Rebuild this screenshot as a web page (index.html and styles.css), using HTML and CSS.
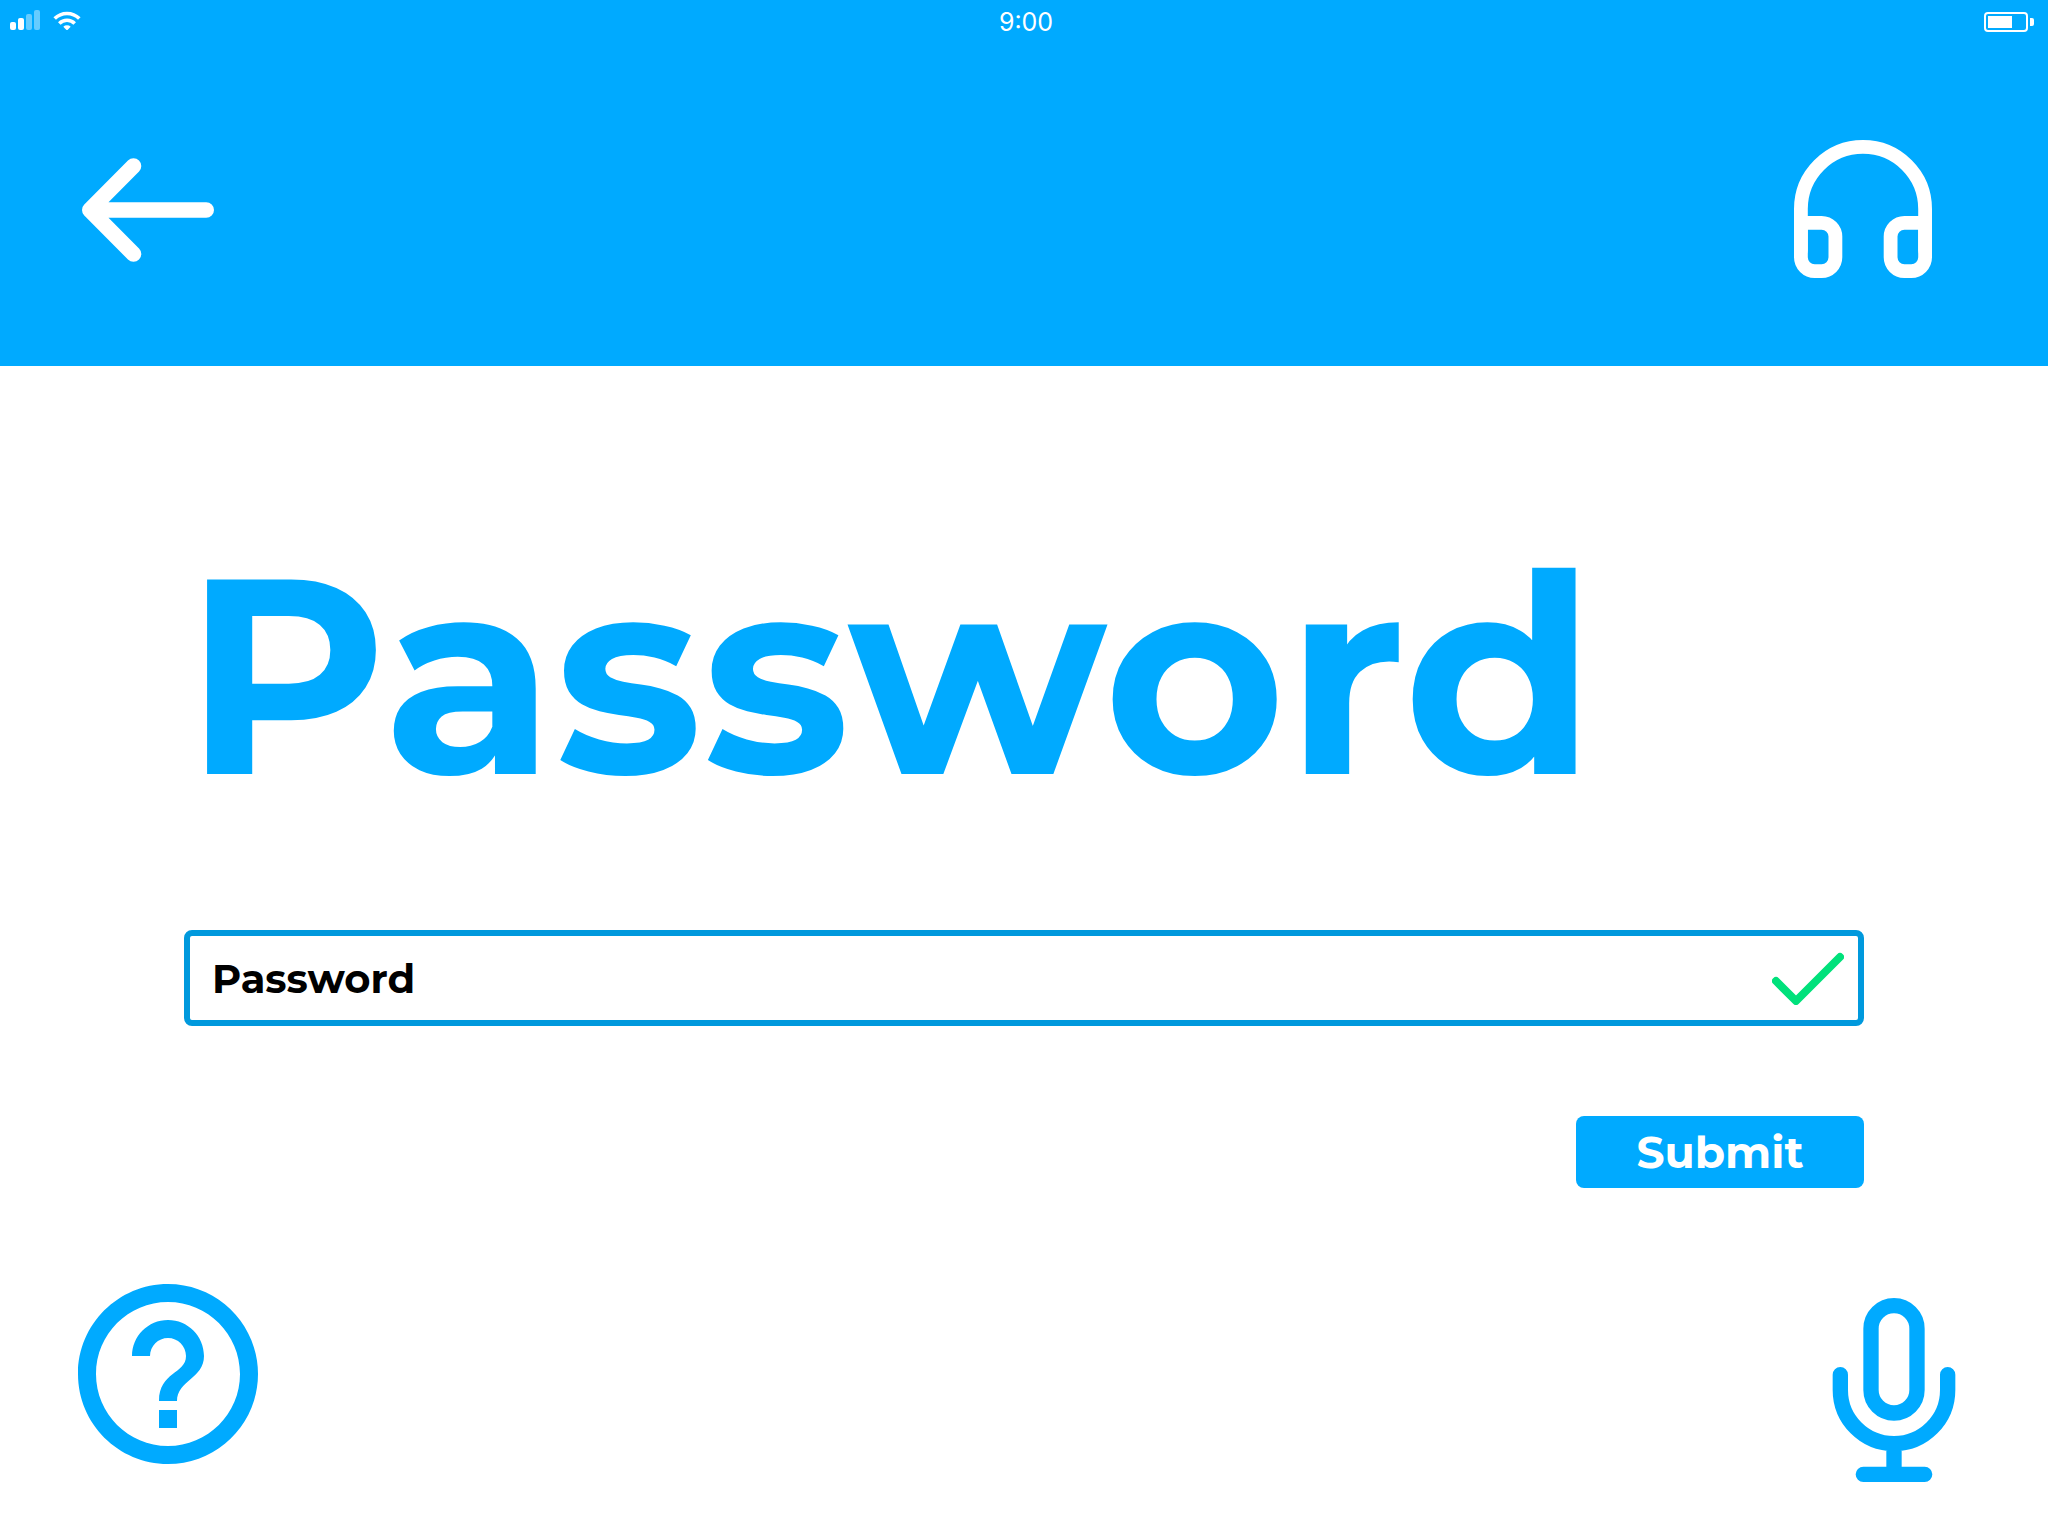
FILE: index.html
```html
<!DOCTYPE html>
<html lang="en">
<head>
<meta charset="utf-8">
<meta name="viewport" content="width=device-width, initial-scale=1">
<title>Password</title>
<link rel="stylesheet" href="styles.css">
</head>
<body>
<header class="header">
  <div class="status">
    <div class="status-left">
      <svg class="signal" viewBox="0 0 30 20" fill="#fff" aria-hidden="true">
        <rect x="0" y="12" width="6" height="8" rx="2"/>
        <rect x="8" y="8" width="6" height="12" rx="2"/>
        <rect x="16" y="4" width="6" height="16" rx="2" opacity=".4"/>
        <rect x="24" y="0" width="6" height="20" rx="2" opacity=".4"/>
      </svg>
      <svg class="wifi" viewBox="0 -1 28 20" fill="none" stroke="#fff" stroke-width="3.6" aria-hidden="true">
        <path d="M1.700 7.600a17.400 17.400 0 0 1 24.600 0"/>
        <path d="M6.300 12.400a10.900 10.900 0 0 1 15.400 0"/>
        <path d="M14 19.500l-3.700-3.700a5.400 5.400 0 0 1 7.400 0z" fill="#fff" stroke="none"/>
      </svg>
    </div>
    <time class="clock">9:00</time>
    <div class="status-right">
      <svg class="battery" viewBox="0 0 50 20" aria-hidden="true">
        <rect x="1" y="1" width="42" height="18" rx="3" fill="none" stroke="#fff" stroke-width="2"/>
        <rect x="4" y="4" width="24" height="12" fill="#fff"/>
        <path d="M46 6h2q2 0 2 2v4q0 2-2 2h-2z" fill="#fff"/>
      </svg>
    </div>
  </div>
  <nav class="nav">
    <button class="icon-button" type="button" aria-label="Back">
      <svg class="back" viewBox="0 -2 132 106" fill="none" stroke="#fff" stroke-width="15.6" stroke-linecap="round" stroke-linejoin="round">
        <path d="M51.500 8L7.800 52l43.700 44M7.800 52h116.400"/>
        <path d="M12 52l11-9v18z" fill="#fff" stroke="none"/>
      </svg>
    </button>
    <button class="icon-button" type="button" aria-label="Listen">
      <svg class="headphones" viewBox="2 2 20 20" fill="none" stroke="#fff" stroke-width="2" stroke-linecap="round" stroke-linejoin="round">
        <path d="M3 18v-6a9 9 0 0 1 18 0v6"/>
        <path d="M21 19a2 2 0 0 1-2 2h-1a2 2 0 0 1-2-2v-3a2 2 0 0 1 2-2h3zM3 19a2 2 0 0 0 2 2h1a2 2 0 0 0 2-2v-3a2 2 0 0 0-2-2H3z"/>
      </svg>
    </button>
  </nav>
</header>
<main class="main">
  <h1 class="title"><label for="password">Password</label></h1>
  <form class="form">
    <div class="field">
      <input class="input" id="password" type="text" value="Password">
      <svg class="check" viewBox="0 -2 72 54" fill="none" stroke="#00e17b" stroke-width="8" stroke-linecap="round" stroke-linejoin="round" aria-hidden="true">
        <path d="M4 28l20 20L68 4"/>
      </svg>
    </div>
    <button class="submit" type="submit">Submit</button>
  </form>
</main>
<footer class="footer">
  <button class="icon-button help-button" type="button" aria-label="Help">
    <svg class="help" viewBox="2 2 20 20" fill="#00aaff">
      <path d="M11 18h2v-2h-2v2zm1-16C6.480 2 2 6.480 2 12s4.480 10 10 10 10-4.480 10-10S17.520 2 12 2zm0 18c-4.410 0-8-3.590-8-8s3.590-8 8-8 8 3.590 8 8-3.590 8-8 8zm0-14c-2.210 0-4 1.790-4 4h2c0-1.100.9-2 2-2s2 .9 2 2c0 2-3 1.750-3 5h2c0-2.250 3-2.500 3-5 0-2.210-1.790-4-4-4z"/>
    </svg>
  </button>
  <button class="icon-button" type="button" aria-label="Speak">
    <svg class="mic" viewBox="4 0 16 24" fill="none" stroke="#00aaff" stroke-width="2" stroke-linecap="round" stroke-linejoin="round">
      <path d="M12 1a3 3 0 0 0-3 3v8a3 3 0 0 0 6 0V4a3 3 0 0 0-3-3z"/>
      <path d="M19 10v2a7 7 0 0 1-14 0v-2M12 19v4M8 23h8"/>
    </svg>
  </button>
</footer>
</body>
</html>
```
FILE: styles.css
```css
* {
  box-sizing: border-box;
}

body {
  display: flex;
  flex-direction: column;
  min-height: 100vh;
  margin: 0;
  background: #fff;
  font-family: "Montserrat", "Inter", sans-serif;
  font-weight: 700;
}

svg {
  display: block;
}

.header {
  background: #00aaff;
  color: #fff;
}

.status {
  display: grid;
  grid-template-columns: 1fr auto 1fr;
  align-items: center;
  height: 44px;
  padding: 0 10px;
}

.status-left {
  display: flex;
  align-items: center;
  gap: 13px;
  padding-bottom: 4px;
}

.status-right {
  display: flex;
  justify-content: flex-end;
  padding-right: 4px;
}

.signal {
  width: 30px;
  height: 20px;
}

.wifi {
  width: 28px;
  height: 20px;
}

.battery {
  width: 50px;
  height: 20px;
}

.clock {
  padding-left: 4px;
  font: 400 25px/44px "Inter", sans-serif;
}

.nav {
  display: flex;
  align-items: center;
  justify-content: space-between;
  padding: 96px 116px 88px 82px;
}

.icon-button {
  padding: 0;
  border: 0;
  background: none;
}

.back {
  width: 132px;
  height: 106px;
}

.headphones {
  width: 138px;
  height: 138px;
}

.main {
  padding: 135px 184px 0;
}

.title {
  margin: 0;
  color: #00aaff;
  font-size: 278px;
  font-weight: 700;
  line-height: 348px;
}

.form {
  display: flex;
  flex-direction: column;
  align-items: flex-end;
  gap: 90px;
  margin-top: 81px;
}

.field {
  display: flex;
  align-items: center;
  width: 100%;
  height: 96px;
  padding: 0 14px 0 22px;
  border: 6px solid #0099dd;
  border-radius: 8px;
}

.input {
  flex: 1;
  min-width: 0;
  height: 84px;
  padding: 0;
  border: 0;
  outline: 0;
  background: none;
  color: #000;
  font: inherit;
  font-size: 40px;
}

.check {
  width: 72px;
  height: 54px;
}

.submit {
  width: 288px;
  height: 72px;
  padding: 0;
  border: 0;
  border-radius: 8px;
  background: #00aaff;
  color: #fff;
  font: inherit;
  font-size: 44px;
}

.footer {
  display: flex;
  align-items: flex-end;
  justify-content: space-between;
  margin-top: auto;
  padding: 0 92px 54px 78px;
}

.help-button {
  margin-bottom: 18px;
}

.help {
  width: 180px;
  height: 180px;
}

.mic {
  width: 124px;
  height: 184px;
}
```
